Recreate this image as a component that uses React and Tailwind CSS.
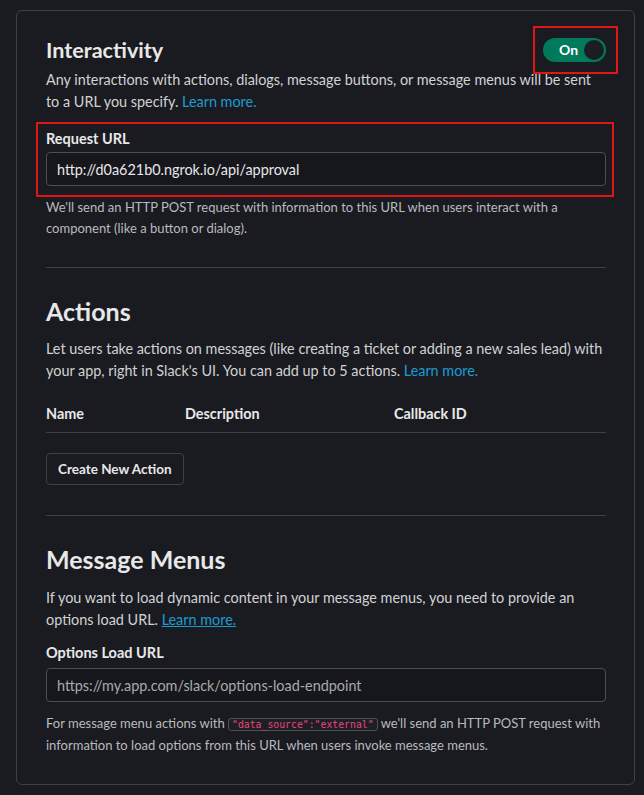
import React from "react";

const Toggle = () => (
  <div className="-my-2 -mr-3 border-2 border-[#e01515] py-[10px] pl-[8px] pr-[10px]">
    <div className="flex h-6 w-[63px] items-center justify-between rounded-full bg-[#007a5a] pl-4 pr-[2px]">
      <span className="text-[14px] font-bold leading-none text-white">On</span>
      <span className="h-5 w-5 rounded-full bg-[#1a1d21]" />
    </div>
  </div>
);

const Link = ({ children, underline }) => (
  <a href="#" className={`text-[#1d9bd1] ${underline ? "underline" : ""}`}>
    {children}
  </a>
);

export default function App() {
  return (
    <div className="min-h-screen bg-[#1a1b21] pl-4 pt-[10px] font-['Lato',sans-serif] text-[#d1d2d3]">
      <div className="w-[619px] rounded-md border border-[#3f4045] pb-7 pl-[29px] pr-[28px] pt-6">
        {/* Interactivity */}
        <div className="flex h-[30px] items-center justify-between">
          <h2 className="text-[21.6px] font-bold leading-[30px] text-[#e8e8e8]">Interactivity</h2>
          <Toggle />
        </div>
        <p className="mt-1 text-[14.4px] leading-[22px]">
          Any interactions with actions, dialogs, message buttons, or message menus will be sent
          to a URL you specify. <Link>Learn more.</Link>
        </p>

        <div className="-ml-[10px] -mr-[8px] mt-[9px] border-2 border-[#e01515] pb-[9px] pl-[8px] pr-[6px] pt-1">
          <label className="block text-[14.5px] font-bold leading-[22px] text-[#e8e8e8]">Request URL</label>
          <input
            className="mt-[2px] h-[34px] w-full rounded border border-[#4d4e52] bg-[#16171c] px-[10px] text-[14.4px] text-[#e8e8e8] outline-none"
            defaultValue="http://d0a621b0.ngrok.io/api/approval"
          />
        </div>
        <p className="text-[13px] leading-[21px] text-[#b9babd]">
          We'll send an HTTP POST request with information to this URL when users interact with a
          component (like a button or dialog).
        </p>

        <div className="mt-7 border-t border-[#3f4045]" />

        {/* Actions */}
        <h2 className="mt-[26px] text-[25px] font-bold leading-[34px] text-[#e8e8e8]">Actions</h2>
        <p className="mt-[10px] text-[14.4px] leading-[22px]">
          Let users take actions on messages (like creating a ticket or adding a new sales lead) with
          your app, right in Slack's UI. You can add up to 5 actions. <Link>Learn more.</Link>
        </p>
        <div className="mt-[21px] grid grid-cols-[139px_209px_1fr] border-b border-[#3f4045] pb-[7px] text-[14.4px] font-bold leading-[22px] text-[#e8e8e8]">
          <span>Name</span>
          <span>Description</span>
          <span>Callback ID</span>
        </div>
        <button className="mt-5 h-8 rounded border border-[#3f4045] px-[11px] text-[13.5px] font-bold text-[#e8e8e8]">
          Create New Action
        </button>

        <div className="mt-[30px] border-t border-[#3f4045]" />

        {/* Message Menus */}
        <h2 className="mt-[26px] text-[25px] font-bold leading-[34px] text-[#e8e8e8]">Message Menus</h2>
        <p className="mt-[11px] text-[14.4px] leading-[22px]">
          If you want to load dynamic content in your message menus, you need to provide an
          options load URL. <Link underline>Learn more.</Link>
        </p>
        <label className="mt-[11px] block text-[14.5px] font-bold leading-[22px] text-[#e8e8e8]">
          Options Load URL
        </label>
        <input
          className="mt-1 h-[34px] w-full rounded border border-[#4d4e52] bg-[#16171c] px-[10px] text-[14.4px] text-[#e8e8e8] outline-none placeholder:text-[#a8a9ab]"
          placeholder="https://my.app.com/slack/options-load-endpoint"
        />
        <p className="mt-[10px] text-[13px] leading-[22px] text-[#b9babd]">
          For message menu actions with{" "}
          <code className="rounded-[3px] border border-[#4d4e52] bg-[#1e1f24] px-[3px] font-['DejaVu_Sans_Mono',monospace] text-[9.8px] leading-none text-[#e8467c]">
            "data_source":"external"
          </code>{" "}
          we'll send an HTTP POST request with information to load options from this URL when users
          invoke message menus.
        </p>
      </div>
    </div>
  );
}
